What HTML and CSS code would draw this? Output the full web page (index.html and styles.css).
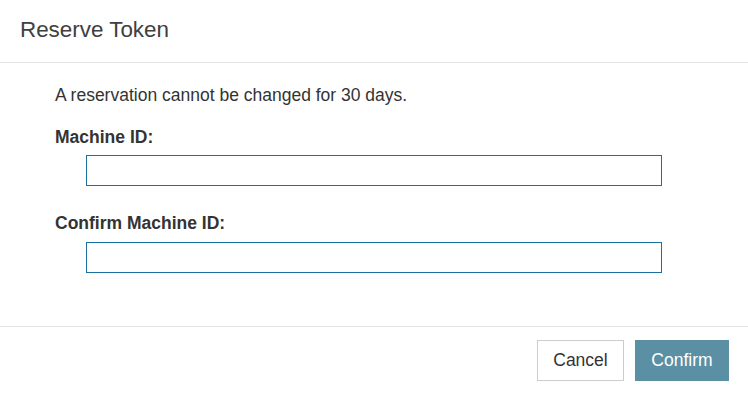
FILE: index.html
```html
<!DOCTYPE html>
<html lang="en">
<head>
<meta charset="utf-8">
<title>Reserve Token</title>
<link rel="stylesheet" href="styles.css">
</head>
<body>
<div class="modal">
  <div class="modal-header">
    <h1 class="modal-title">Reserve Token</h1>
  </div>
  <div class="modal-body">
    <p class="notice">A reservation cannot be changed for 30 days.</p>
    <label class="field-label" for="mid">Machine ID:</label>
    <input class="field-input" id="mid" type="text">
    <label class="field-label second" for="cmid">Confirm Machine ID:</label>
    <input class="field-input" id="cmid" type="text">
  </div>
  <div class="modal-footer">
    <button class="btn btn-cancel" type="button">Cancel</button>
    <button class="btn btn-confirm" type="button">Confirm</button>
  </div>
</div>
</body>
</html>
```
FILE: styles.css
```css
html, body {
  margin: 0;
  padding: 0;
  background: #ffffff;
}
body {
  font-family: "Liberation Sans", Arial, sans-serif;
  color: #333333;
}
.modal {
  width: 748px;
  height: 395px;
  display: flex;
  flex-direction: column;
  box-sizing: border-box;
}
.modal-header {
  padding: 15px 20px 17px;
  border-bottom: 1px solid #e5e5e5;
}
.modal-title {
  margin: 0;
  font-size: 22.4px;
  font-weight: normal;
  line-height: 30px;
  color: #404040;
}
.modal-body {
  padding: 20px 55px 0;
  display: flex;
  flex-direction: column;
  flex: 1;
}
.notice {
  margin: 0 0 18px;
  font-size: 17.5px;
  line-height: 24px;
}
.field-label {
  display: block;
  font-size: 17.5px;
  font-weight: bold;
  line-height: 24px;
  margin-bottom: 6px;
}
.field-label.second {
  margin-top: 25px;
  margin-bottom: 7px;
}
.field-input {
  display: block;
  box-sizing: border-box;
  height: 31px;
  margin: 0 31px;
  padding: 0 8px;
  border: 1px solid #1a70a0;
  border-radius: 0;
  outline: none;
  font-family: inherit;
  font-size: 16px;
  background: #fff;
}
.modal-footer {
  border-top: 1px solid #e5e5e5;
  padding: 13px 19px 14px;
  display: flex;
  justify-content: flex-end;
  gap: 11px;
}
.btn {
  height: 41px;
  box-sizing: border-box;
  font-family: inherit;
  font-size: 17.5px;
  padding: 0;
  border-radius: 0;
  cursor: pointer;
}
.btn-cancel {
  width: 87px;
  background: #ffffff;
  color: #333333;
  border: 1px solid #cccccc;
}
.btn-confirm {
  width: 94px;
  background: #5b8fa3;
  color: #ffffff;
  border: 1px solid #5b8fa3;
}
```
